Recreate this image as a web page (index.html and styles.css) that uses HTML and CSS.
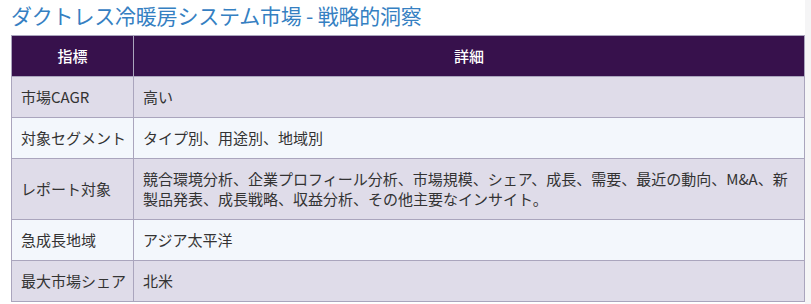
FILE: index.html
```html
<!DOCTYPE html>
<html lang="ja">
<head>
<meta charset="utf-8">
<link rel="stylesheet" href="styles.css">
</head>
<body>
<div class="page">
  <main class="content">
    <h2 class="title">ダクトレス冷暖房システム市場 - 戦略的洞察</h2>
    <table class="insights">
      <colgroup>
        <col class="col-key">
        <col class="col-val">
      </colgroup>
      <thead>
        <tr><th>指標</th><th>詳細</th></tr>
      </thead>
      <tbody>
        <tr class="odd"><td class="key">市場CAGR</td><td>高い</td></tr>
        <tr class="even"><td class="key">対象セグメント</td><td>タイプ別、用途別、地域別</td></tr>
        <tr class="odd"><td class="key">レポート対象</td><td>競合環境分析、企業プロフィール分析、市場規模、シェア、成長、需要、最近の動向、M&amp;A、新製品発表、成長戦略、収益分析、その他主要なインサイト。</td></tr>
        <tr class="even"><td class="key">急成長地域</td><td>アジア太平洋</td></tr>
        <tr class="odd"><td class="key">最大市場シェア</td><td>北米</td></tr>
      </tbody>
    </table>
  </main>
  <div class="edge"></div>
</div>
</body>
</html>
```

FILE: styles.css
```css
html, body {
  margin: 0;
  padding: 0;
  background: #ffffff;
}
body {
  font-family: "Noto Sans CJK JP", "Noto Sans", sans-serif;
  color: #333333;
}
.page {
  display: flex;
  height: 304px;
  overflow: hidden;
}
.content {
  flex: 1;
  padding: 1px 0 0 11px;
  min-width: 0;
}
.edge {
  width: 6px;
  background: #f5f5f6;
}
.title {
  margin: 0 0 6px 0;
  font-size: 21px;
  line-height: 28px;
  font-weight: 400;
  color: #3580c2;
  letter-spacing: -0.2px;
}
.insights {
  width: 794px;
  table-layout: fixed;
  border-collapse: collapse;
  font-size: 15px;
  line-height: 20px;
}
.insights .col-key {
  width: 122px;
}
.insights th,
.insights td {
  border: 1px solid #aaa5bd;
  padding: 10px 9px;
  text-align: left;
  vertical-align: middle;
}
.insights td.key {
  white-space: nowrap;
  padding-right: 4px;
}
.insights th {
  background: #37114c;
  color: #ffffff;
  text-align: center;
  font-weight: 500;
}
.insights tr.odd td {
  background: #dfdce9;
}
.insights tr.even td {
  background: #f3f7fc;
}
```
